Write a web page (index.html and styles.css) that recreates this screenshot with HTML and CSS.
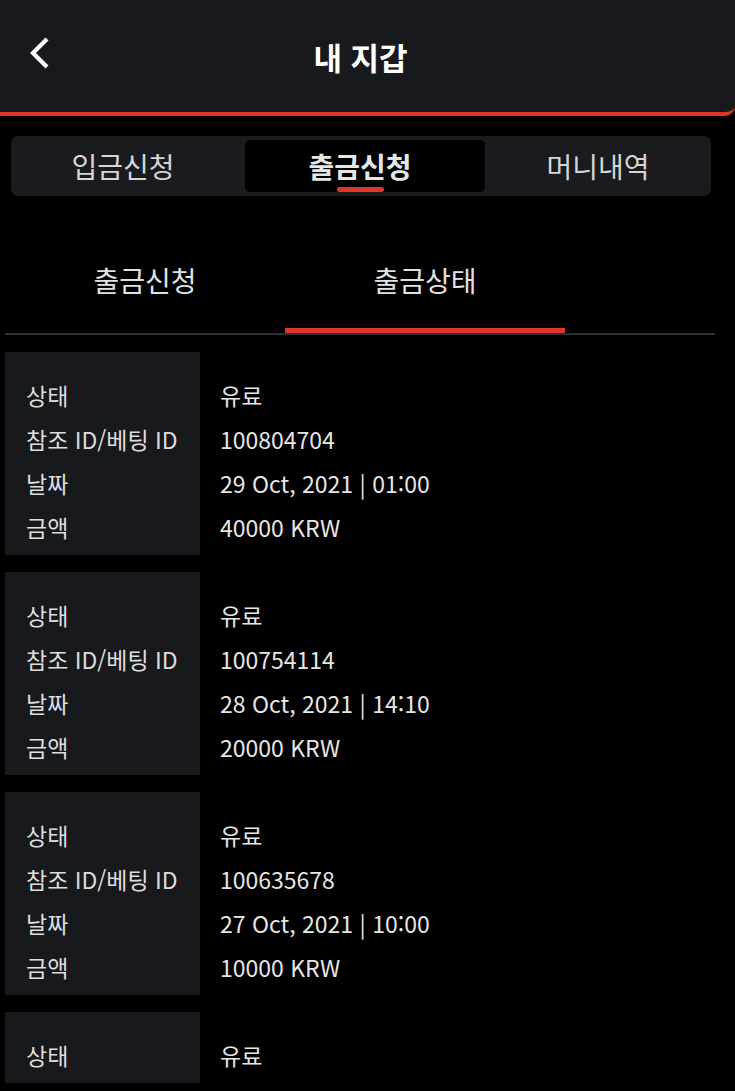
FILE: index.html
```html
<!DOCTYPE html>
<html lang="ko">
<head>
<meta charset="utf-8">
<title>내 지갑</title>
<link rel="stylesheet" href="styles.css">
</head>
<body>
<header class="topbar">
  <a class="back" href="#" aria-label="뒤로">
    <svg width="22" height="34" viewBox="0 0 22 34"><polyline points="18,3 4,17 18,31" fill="none" stroke="#ffffff" stroke-width="4.2" stroke-linejoin="miter"/></svg>
  </a>
  <h1 class="title">내 지갑</h1>
  <span></span>
</header>

<nav class="segment">
  <div class="seg seg-1">입금신청</div>
  <div class="seg seg-2 active">출금신청</div>
  <div class="seg seg-3">머니내역</div>
</nav>

<div class="subtabs">
  <div class="subtab">출금신청</div>
  <div class="subtab active">출금상태</div>
</div>

<main class="list">
  <section class="card">
    <div class="labels">
      <div class="row">상태</div>
      <div class="row">참조 ID/베팅 ID</div>
      <div class="row">날짜</div>
      <div class="row">금액</div>
    </div>
    <div class="values">
      <div class="row">유료</div>
      <div class="row">100804704</div>
      <div class="row">29 Oct, 2021 | 01:00</div>
      <div class="row">40000 KRW</div>
    </div>
  </section>
  <section class="card">
    <div class="labels">
      <div class="row">상태</div>
      <div class="row">참조 ID/베팅 ID</div>
      <div class="row">날짜</div>
      <div class="row">금액</div>
    </div>
    <div class="values">
      <div class="row">유료</div>
      <div class="row">100754114</div>
      <div class="row">28 Oct, 2021 | 14:10</div>
      <div class="row">20000 KRW</div>
    </div>
  </section>
  <section class="card">
    <div class="labels">
      <div class="row">상태</div>
      <div class="row">참조 ID/베팅 ID</div>
      <div class="row">날짜</div>
      <div class="row">금액</div>
    </div>
    <div class="values">
      <div class="row">유료</div>
      <div class="row">100635678</div>
      <div class="row">27 Oct, 2021 | 10:00</div>
      <div class="row">10000 KRW</div>
    </div>
  </section>
  <section class="card">
    <div class="labels">
      <div class="row">상태</div>
    </div>
    <div class="values">
      <div class="row">유료</div>
    </div>
  </section>
</main>
</body>
</html>
```

FILE: styles.css
```css
* { box-sizing: border-box; }
html, body {
  margin: 0;
  padding: 0;
  background: #000000;
}
body {
  font-family: "Noto Sans CJK KR", "Noto Sans", sans-serif;
  color: #e4e4e4;
  overflow: hidden;
}

.topbar {
  height: 116px;
  background: #18191d;
  border-bottom: 4px solid #e0352b;
  border-bottom-right-radius: 10px;
  display: grid;
  grid-template-columns: 1fr auto 1fr;
  align-items: center;
  padding: 0 43px 0 29px;
}
.back {
  display: flex;
  width: 22px;
  height: 34px;
  margin-top: -6px;
}
.title {
  margin: 0;
  padding-top: 2px;
  font-size: 31px;
  font-weight: 700;
  color: #ffffff;
  line-height: 40px;
}

.segment {
  margin: 20px 24px 0 11px;
  padding: 4px;
  height: 60px;
  background: #1a1b1f;
  border-radius: 7px;
  display: grid;
  grid-template-columns: 230px 240px 1fr;
}
.seg {
  position: relative;
  height: 52px;
  line-height: 52px;
  text-align: center;
  font-size: 28px;
  color: #d6d6d6;
}
.seg-1 { padding-right: 14px; }
.seg-2 { padding-right: 10px; }
.seg-3 { padding-left: 4px; }
.seg.active {
  background: #000000;
  border-radius: 5px;
  font-weight: 700;
  color: #e6e6e6;
}
.seg.active::after {
  content: "";
  position: absolute;
  bottom: 0;
  left: calc(50% - 5px);
  width: 47px;
  height: 5px;
  margin-left: -23px;
  background: #e0352b;
  border-radius: 3px;
}

.subtabs {
  margin: 48px 20px 0 5px;
  display: flex;
  border-bottom: 2px solid #2b2e37;
}
.subtab {
  width: 280px;
  padding: 17px 0 29px;
  line-height: 38px;
  font-size: 28px;
  text-align: center;
  color: #e2e2e2;
  border-bottom: 5px solid transparent;
}
.subtab.active {
  border-bottom-color: #e0352b;
}

.list {
  margin: 17px 20px 0 5px;
  display: flex;
  flex-direction: column;
  gap: 17px;
}
.card {
  display: flex;
}
.labels, .values {
  padding: 21px 0 6px;
}
.labels {
  width: 195px;
  padding-left: 21px;
  background: #18191d;
  color: #dedede;
}
.values {
  flex: 1;
  padding-left: 20px;
  color: #e6e6e6;
}
.row {
  font-size: 23px;
  line-height: 44px;
  height: 44px;
  white-space: nowrap;
}
```
